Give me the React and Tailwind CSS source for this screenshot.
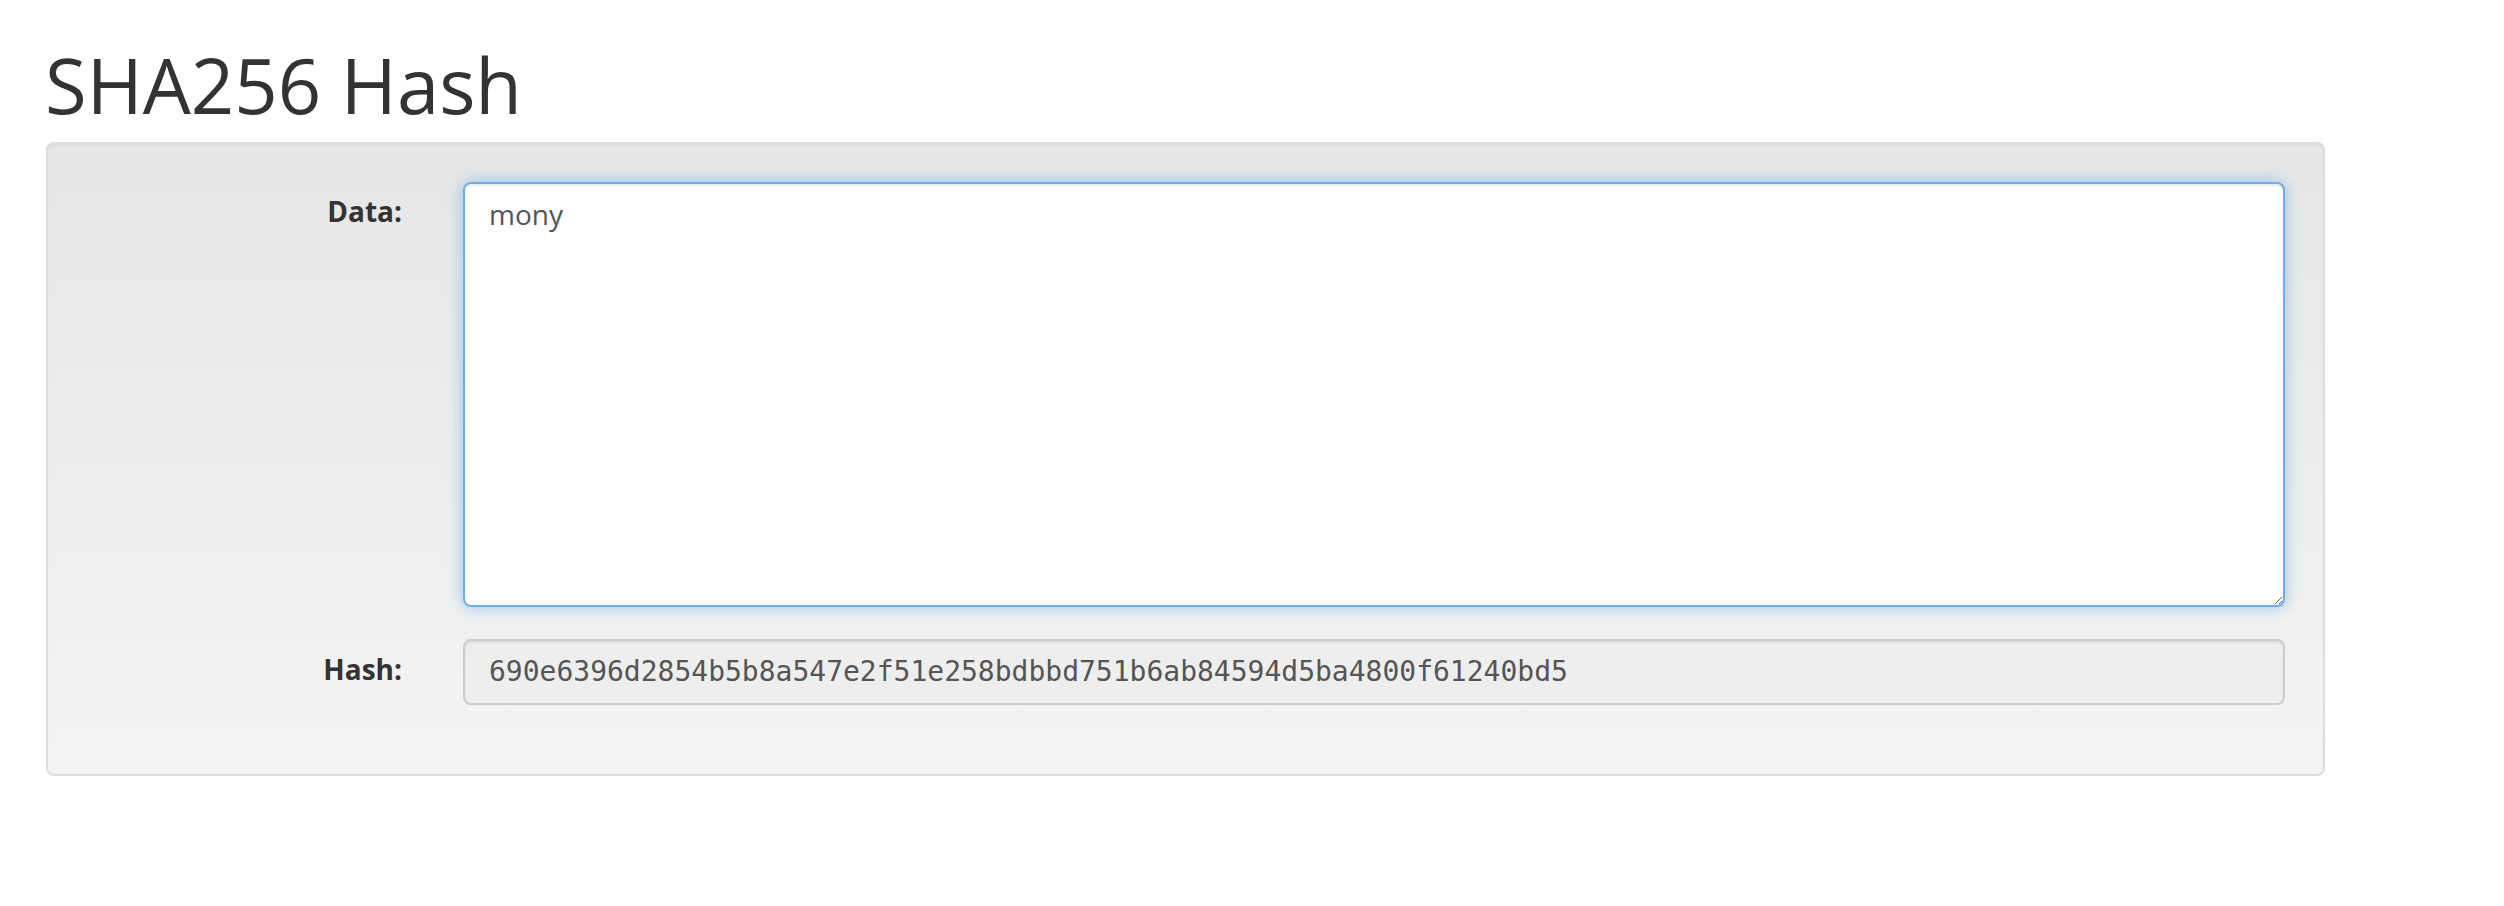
import React from "react";

export default function App() {
  return (
    <div
      className="min-h-[906px] w-[2504px] bg-white pl-[46px] pt-[45px]"
      style={{ fontFamily: '"Open Sans", "Noto Sans", sans-serif' }}
    >
      <h1 className="ml-[-1px] mb-[17px] text-[76px] leading-[80px] font-normal text-[#333333]">
        SHA256 Hash
      </h1>
      <div className="w-[2279px] rounded-[8px] border-2 border-[#dddddd] bg-linear-to-b from-[#e6e6e6] to-[#f4f4f4] pl-[38px] pr-[38px] pt-[38px] pb-[69px] shadow-[inset_0_2px_2px_rgba(0,0,0,0.05)]">
        <div className="grid grid-cols-[316px_1fr] gap-x-[61px] gap-y-[32px]">
          <label className="pt-[9px] text-right text-[28px] leading-[40px] font-bold text-[#333333]">
            Data:
          </label>
          <textarea
            defaultValue="mony"
            className="block h-[425px] w-full resize-y rounded-[8px] border-2 border-[#74ace6] bg-white px-[24px] py-[10px] text-[28px] leading-[40px] text-[#555555] outline-none shadow-[inset_0_2px_2px_rgba(0,0,0,0.075),0_0_16px_rgba(82,168,236,0.6)]"
            style={{ fontFamily: '"Open Sans", "Noto Sans", sans-serif' }}
          />
          <label className="pt-[10px] text-right text-[28px] leading-[40px] font-bold text-[#333333]">
            Hash:
          </label>
          <div
            className="h-[66px] rounded-[8px] border-2 border-[#cccccc] bg-[#eeeeee] px-[24px] py-[11px] text-[28px] leading-[40px] text-[#555555] shadow-[inset_0_2px_2px_rgba(0,0,0,0.075)]"
            style={{ fontFamily: '"DejaVu Sans Mono", "Liberation Mono", monospace' }}
          >
            690e6396d2854b5b8a547e2f51e258bdbbd751b6ab84594d5ba4800f61240bd5
          </div>
        </div>
      </div>
    </div>
  );
}
